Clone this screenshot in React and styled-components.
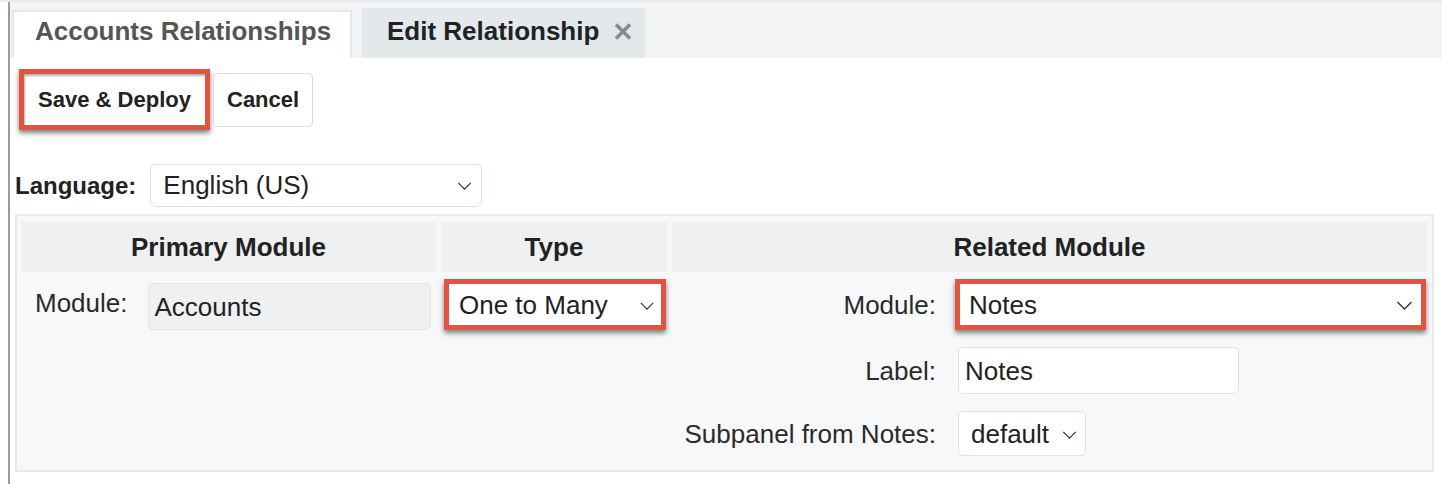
import React from "react";
import styled, {createGlobalStyle} from "styled-components";

const GlobalStyle = createGlobalStyle`
  html, body {
    margin: 0;
    padding: 0;
    background: #fff;
  }
  body {
    font-family: "Liberation Sans", Arial, Helvetica, sans-serif;
    color: #222;
  }
`

const Page = styled.div`
  box-sizing: border-box;
  height: 484px;
  overflow: hidden;
  border-top: 2px solid #e7ebed;
  padding-left: 8px;
`

const Frame = styled.div`
  height: 100%;
  border-left: 2px solid #9b9b9b;
`

const TabBar = styled.div`
  display: flex;
  align-items: flex-end;
  height: 56px;
  padding-left: 2px;
  background: #f1f3f5;
`

const Tab = styled.div`
  box-sizing: border-box;
  display: flex;
  align-items: flex-start;
  gap: 14px;
  width: ${props => props.active ? '340px' : 'auto'};
  height: ${props => props.active ? '48px' : '50px'};
  margin-left: ${props => props.active ? '0' : '10px'};
  padding: ${props => props.active ? '6px 0 0 21px' : '10px 12px 0 25px'};
  background: ${props => props.active ? '#fff' : '#e3e8eb'};
  border: ${props => props.active ? '2px solid #e3e8eb' : 'none'};
  border-bottom: none;
  color: ${props => props.active ? '#555' : '#222'};
  font-size: 26px;
  font-weight: bold;
  line-height: 26px;
  white-space: nowrap;
`

const CloseIcon = styled.svg`
  margin-top: 5px;
`

const Toolbar = styled.div`
  display: flex;
  align-items: center;
  gap: 3px;
  padding: 11px 0 0 9px;
`

const Button = styled.button`
  box-sizing: border-box;
  height: 54px;
  padding: 0 13px;
  background: #fff;
  border: 1px solid #d9dde0;
  border-radius: 4px;
  color: #222;
  font-family: inherit;
  font-size: 22px;
  font-weight: bold;
`

const HighlightButton = styled(Button)`
  width: 191px;
  height: 61px;
  padding: 0;
  border: 5px solid #e6523b;
  border-radius: 0;
  box-shadow: 0 3px 5px rgba(0, 0, 0, 0.5), inset 1px 2px 2px rgba(0, 0, 0, 0.3);
`

const LanguageRow = styled.div`
  display: flex;
  align-items: center;
  gap: 14px;
  margin-top: 34px;
  padding-left: 5px;
`

const LanguageLabel = styled.span`
  font-size: 24px;
  font-weight: bold;
  color: #222;
`

const Select = styled.div`
  box-sizing: border-box;
  display: flex;
  align-items: center;
  justify-content: space-between;
  width: ${props => props.width || 'auto'};
  height: ${props => props.height || '43px'};
  padding: ${props => props.pad || '0 9px 0 12px'};
  background: #fff;
  border: ${props => props.bare ? 'none' : '1px solid #dde2e5'};
  border-radius: ${props => props.bare ? '0' : '5px'};
  font-size: 26px;
  color: #222;
  white-space: nowrap;
`

const Highlight = styled.div`
  box-sizing: border-box;
  display: flex;
  width: ${props => props.width || 'auto'};
  height: 51px;
  margin: ${props => props.margin || '0'};
  border: 5px solid #e6523b;
  box-shadow: 0 3px 5px rgba(0, 0, 0, 0.5), inset 1px 2px 2px rgba(0, 0, 0, 0.3);

  & > * {
    flex: 1;
    height: 100%;
  }
`

const Panel = styled.div`
  display: grid;
  grid-template-columns: 415px 226px 1fr;
  grid-template-rows: 50px auto;
  column-gap: 5px;
  row-gap: 5px;
  margin: 7px 8px 0 5px;
  padding: 6px 5px 14px 4px;
  background: #f7f8fa;
  border: 2px solid #e6eaec;
`

const HeaderCell = styled.div`
  display: flex;
  align-items: center;
  justify-content: center;
  background: #eef0f2;
  font-size: 26px;
  font-weight: bold;
  color: #222;
`

const PrimaryCell = styled.div`
  display: flex;
  align-items: flex-start;
  gap: 20px;
  padding-left: 14px;
`

const FieldLabel = styled.span`
  font-size: 26px;
  line-height: 30px;
  color: #2a2a2a;
  margin-top: ${props => props.top || '0'};
  text-align: right;
  white-space: nowrap;
`

const ReadOnlyInput = styled.div`
  box-sizing: border-box;
  display: flex;
  align-items: center;
  width: 283px;
  height: 47px;
  margin-top: 6px;
  padding: 2px 0 0 6px;
  background: #eef0f2;
  border: 1px solid #e1e5e8;
  border-radius: 5px;
  font-size: 26px;
  color: #222;
`

const TextInput = styled.div`
  box-sizing: border-box;
  display: flex;
  align-items: center;
  width: 281px;
  height: 47px;
  padding: 2px 0 0 6px;
  background: #fff;
  border: 1px solid #dde2e5;
  border-radius: 5px;
  font-size: 26px;
  color: #222;
`

const RelatedGrid = styled.div`
  display: grid;
  grid-template-columns: 264px 1fr;
  grid-template-rows: 51px 47px 45px;
  column-gap: 22px;
  row-gap: 17px;
  margin-top: 2px;
  align-items: center;
`

const Chevron = ({w = 15, h = 8}) => (
  <svg width={w} height={h} viewBox="0 0 16 9" fill="none">
    <polyline points="1,1 8,8 15,1" stroke="#333" strokeWidth="1.4"/>
  </svg>
)

export default function App() {
  return (
    <React.Fragment>
      <GlobalStyle/>
      <Page>
        <Frame>
          <TabBar>
            <Tab active>Accounts Relationships</Tab>
            <Tab>
              Edit Relationship
              <CloseIcon width="20" height="17" viewBox="0 0 20 17">
                <path d="M3 1.5 L17 15.5 M17 1.5 L3 15.5" stroke="#8b8b8b" strokeWidth="3.6"/>
              </CloseIcon>
            </Tab>
          </TabBar>

          <Toolbar>
            <HighlightButton>Save &amp; Deploy</HighlightButton>
            <Button>Cancel</Button>
          </Toolbar>

          <LanguageRow>
            <LanguageLabel>Language:</LanguageLabel>
            <Select width="332px">
              English (US)
              <Chevron/>
            </Select>
          </LanguageRow>

          <Panel>
            <HeaderCell>Primary Module</HeaderCell>
            <HeaderCell>Type</HeaderCell>
            <HeaderCell>Related Module</HeaderCell>

            <PrimaryCell>
              <FieldLabel top="11px">Module:</FieldLabel>
              <ReadOnlyInput>Accounts</ReadOnlyInput>
            </PrimaryCell>

            <div>
              <Highlight width="222px" margin="2px 0 0 3px">
                <Select bare pad="2px 7px 0 10px">
                  One to Many
                  <Chevron w={14} h={8}/>
                </Select>
              </Highlight>
            </div>

            <RelatedGrid>
              <FieldLabel>Module:</FieldLabel>
              <Highlight margin="0 1px 0 -3px">
                <Select bare pad="2px 8px 0 9px">
                  Notes
                  <Chevron w={17} h={9}/>
                </Select>
              </Highlight>

              <FieldLabel>Label:</FieldLabel>
              <TextInput>Notes</TextInput>

              <FieldLabel>Subpanel from Notes:</FieldLabel>
              <Select width="128px" height="45px" pad="2px 8px 0 12px">
                default
                <Chevron/>
              </Select>
            </RelatedGrid>
          </Panel>
        </Frame>
      </Page>
    </React.Fragment>
  )
}
